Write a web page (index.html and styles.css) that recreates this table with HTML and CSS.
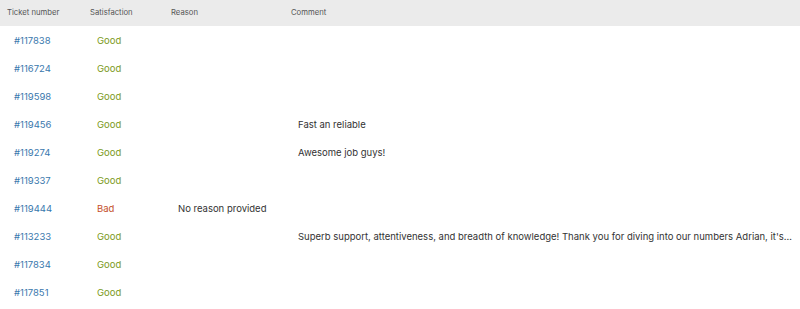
FILE: index.html
```html
<!DOCTYPE html>
<html>
<head>
<meta charset="utf-8">
<link rel="stylesheet" href="styles.css">
</head>
<body>
<table class="tickets">
  <colgroup>
    <col class="c-num"><col class="c-sat"><col class="c-reason"><col class="c-comment">
  </colgroup>
  <thead>
    <tr><th>Ticket number</th><th>Satisfaction</th><th>Reason</th><th>Comment</th></tr>
  </thead>
  <tbody>
    <tr><td class="num">#117838</td><td class="good">Good</td><td></td><td></td></tr>
    <tr><td class="num">#116724</td><td class="good">Good</td><td></td><td></td></tr>
    <tr><td class="num">#119598</td><td class="good">Good</td><td></td><td></td></tr>
    <tr><td class="num">#119456</td><td class="good">Good</td><td></td><td class="comment">Fast an reliable</td></tr>
    <tr><td class="num">#119274</td><td class="good">Good</td><td></td><td class="comment">Awesome job guys!</td></tr>
    <tr><td class="num">#119337</td><td class="good">Good</td><td></td><td></td></tr>
    <tr><td class="num">#119444</td><td class="bad">Bad</td><td class="reason">No reason provided</td><td></td></tr>
    <tr><td class="num">#113233</td><td class="good">Good</td><td></td><td class="comment">Superb support, attentiveness, and breadth of knowledge! Thank you for diving into our numbers Adrian, it's…</td></tr>
    <tr><td class="num">#117834</td><td class="good">Good</td><td></td><td></td></tr>
    <tr><td class="num">#117851</td><td class="good">Good</td><td></td><td></td></tr>
  </tbody>
</table>
</body>
</html>
```
FILE: styles.css
```css
html, body {
  margin: 0;
  padding: 0;
  background: #fff;
}
body {
  font-family: Inter, "Liberation Sans", sans-serif;
  color: #333;
}
.tickets {
  width: 800px;
  border-collapse: collapse;
  table-layout: fixed;
}
.c-num { width: 83px; }
.c-sat { width: 81px; }
.c-reason { width: 120px; }
.tickets thead tr {
  background: #ebebeb;
}
.tickets th {
  height: 25px;
  padding: 0 0 1px 7px;
  text-align: left;
  font-weight: 400;
  font-size: 7.7px;
  color: #555;
  white-space: nowrap;
}
.tickets td {
  height: 27px;
  padding: 1px 0 0 14px;
  font-size: 9.5px;
  white-space: nowrap;
  overflow: hidden;
}
.num { color: #3a78ad; }
.good { color: #7b9a1c; }
.bad { color: #c4502b; }
.reason, .comment { color: #333; }
```
